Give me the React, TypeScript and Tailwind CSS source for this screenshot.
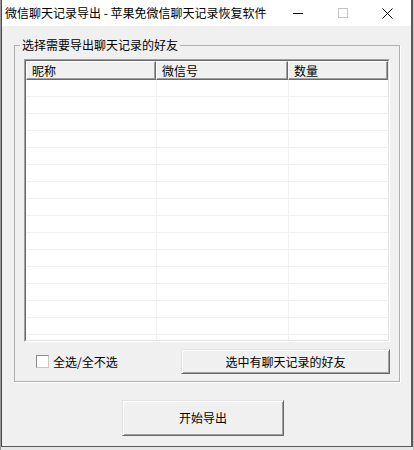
import React from 'react';

const rows = Array.from({ length: 16 });

function WinButton({ className, children }: { className: string; children: React.ReactNode }) {
    return (
        <div
            className={`flex items-center justify-center bg-[#f0f0f0] border border-t-[#e3e3e3] border-l-[#e3e3e3] border-r-[#696969] border-b-[#696969] shadow-[inset_1px_1px_0_#ffffff,inset_-1px_-1px_0_#a0a0a0] text-[12px] leading-[16px] text-black ${className}`}
        >
            {children}
        </div>
    );
}

export default function App() {
    return (
        <div className="w-[414px] h-[450px] flex flex-col bg-[#e6e6e6] border-l border-l-[#9a9a9a] border-r border-r-[#c8c8c8] pb-[3px] font-['Noto_Sans_CJK_SC','Microsoft_YaHei',sans-serif] text-black select-none">
            <div className="flex-1 flex flex-col border-l border-l-[#4a4a4a] border-r-2 border-r-[#5a5a5a] border-b border-b-[#5a5a5a]">
                {/* Title bar */}
                <div className="h-[26px] bg-white flex items-center">
                    <span className="ml-[3px] text-[12px] leading-[16px] whitespace-nowrap">微信聊天记录导出 - 苹果免微信聊天记录恢复软件</span>
                    <div className="ml-auto mr-[1px] flex h-full">
                        <div className="w-[45px] h-full flex items-center justify-center">
                            <svg width="10" height="10" viewBox="0 0 10 10">
                                <path d="M0 5.5H10" stroke="#000" strokeWidth="1" />
                            </svg>
                        </div>
                        <div className="w-[45px] h-full flex items-center justify-center">
                            <svg width="10" height="10" viewBox="0 0 10 10">
                                <rect x="0.5" y="0.5" width="9" height="9" fill="none" stroke="#c4c4c4" strokeWidth="1" />
                            </svg>
                        </div>
                        <div className="w-[45px] h-full flex items-center justify-center">
                            <svg width="11" height="11" viewBox="0 0 11 11">
                                <path d="M0.5 0.5L10.5 10.5M10.5 0.5L0.5 10.5" stroke="#000" strokeWidth="1" />
                            </svg>
                        </div>
                    </div>
                </div>

                {/* Client area */}
                <div className="flex-1 bg-[#f0f0f0] flex flex-col">
                    <fieldset className="mt-[11px] ml-[12px] w-[386px] m-0 p-0 border border-[#b0b0b0] shadow-[1px_1px_0_#ffffff]">
                        <legend className="ml-[5px] px-[2px] text-[12px] leading-[16px]">选择需要导出聊天记录的好友</legend>
                        <div className="px-[9px] pt-[6px] pb-[7px]">
                            {/* List view */}
                            <div className="h-[283px] border border-t-[#a0a0a0] border-l-[#a0a0a0] border-r-white border-b-white">
                                <div className="h-full border border-t-[#696969] border-l-[#696969] border-r-[#e3e3e3] border-b-[#e3e3e3] bg-white overflow-hidden flex flex-col">
                                    <div className="flex h-[19px] shrink-0 text-[12px] leading-[16px]">
                                        <div className="w-[130px] flex items-center pl-[5px] bg-[#f0f0f0] border border-t-white border-l-white border-r-[#696969] border-b-[#696969] shadow-[inset_-1px_-1px_0_#a0a0a0]">昵称</div>
                                        <div className="w-[132px] flex items-center pl-[5px] bg-[#f0f0f0] border border-t-white border-l-white border-r-[#696969] border-b-[#696969] shadow-[inset_-1px_-1px_0_#a0a0a0]">微信号</div>
                                        <div className="flex-1 flex items-center pl-[5px] bg-[#f0f0f0] border border-t-white border-l-white border-r-[#696969] border-b-[#696969] shadow-[inset_-1px_-1px_0_#a0a0a0]">数量</div>
                                    </div>
                                    {rows.map((_, i) => (
                                        <div key={i} className="flex h-[17px] shrink-0 border-b border-b-[#f0f0f0]">
                                            <div className="w-[131px] border-r border-r-[#f0f0f0]" />
                                            <div className="w-[132px] border-r border-r-[#f0f0f0]" />
                                            <div className="flex-1" />
                                        </div>
                                    ))}
                                </div>
                            </div>

                            {/* Bottom row */}
                            <div className="mt-[7px] flex items-center">
                                <div className="ml-[12px] w-[13px] h-[13px] bg-white border border-[#8c8c8c] border-r-[#c8c8c8] border-b-[#c8c8c8]" />
                                <span className="ml-[4px] text-[12px] leading-[16px]">全选/全不选</span>
                                <WinButton className="ml-auto w-[209px] h-[25px]">选中有聊天记录的好友</WinButton>
                            </div>
                        </div>
                    </fieldset>

                    <WinButton className="mt-[18px] ml-[120px] w-[162px] h-[36px]">开始导出</WinButton>
                </div>
            </div>
        </div>
    );
}
